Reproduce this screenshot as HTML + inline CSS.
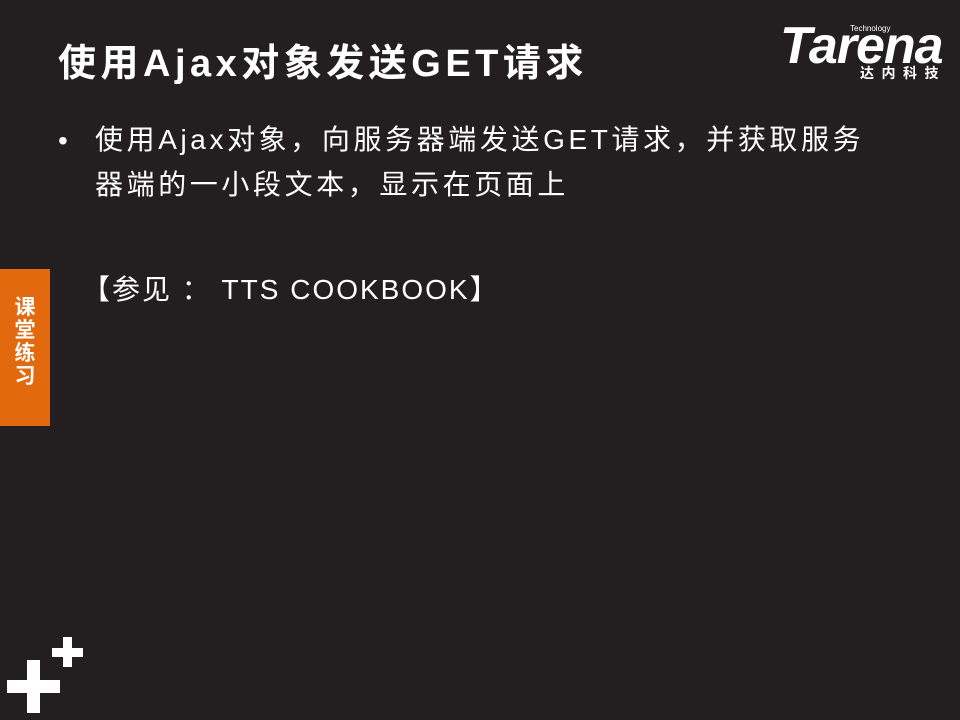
<!DOCTYPE html>
<html><head><meta charset="utf-8"><style>
body{margin:0;width:960px;height:720px;background:#231f20;position:relative;overflow:hidden;font-family:"Liberation Sans","Noto Sans CJK SC",sans-serif;color:#fff}
.a{position:absolute}
.w{background:#fff;position:absolute}
</style></head><body>
<div class="a" style="left:58px;top:38px;font-size:38px;font-weight:bold;line-height:52px;letter-spacing:4.5px">使用Ajax对象发送GET请求</div>
<div class="a" style="left:850px;top:24px;font-size:8px;">Technology</div>
<div class="a" style="left:780px;top:18px;font-size:52px;font-weight:bold;font-style:italic;line-height:56px;letter-spacing:-1px">Tarena</div>
<div class="a" style="left:860px;top:63px;font-size:14px;font-weight:bold;letter-spacing:7.5px">达内科技</div>
<div class="a" style="left:58px;top:118px;font-size:28px;line-height:45px">•</div>
<div class="a" style="left:95px;top:117px;font-size:28px;line-height:45px;width:840px;letter-spacing:3.6px">使用Ajax对象，向服务器端发送GET请求，并获取服务<br>器端的一小段文本，显示在页面上</div>
<div class="a" style="left:82px;top:267px;font-size:28px;line-height:45px;letter-spacing:2px">【参见 ： TTS COOKBOOK】</div>
<div class="a" style="left:0;top:269px;width:50px;height:157px;background:#e2690e"></div>
<div class="a" style="left:12px;top:296px;width:26px;font-size:21px;font-weight:bold;line-height:23px;text-align:center">课堂练习</div>
<div class="w" style="left:7px;top:680px;width:53px;height:13px"></div>
<div class="w" style="left:27px;top:660px;width:13px;height:53px"></div>
<div class="w" style="left:52px;top:648px;width:31px;height:9px"></div>
<div class="w" style="left:63px;top:637px;width:9px;height:30px"></div>
</body></html>
